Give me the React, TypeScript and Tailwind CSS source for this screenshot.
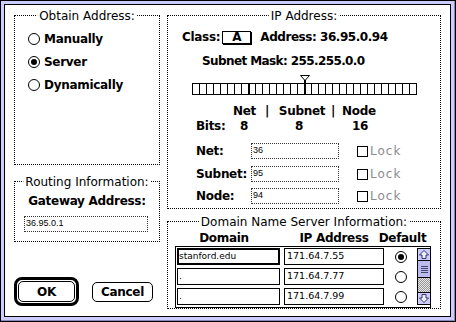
import React from "react";

const bold = "font-bold tracking-[-0.3px] text-[12px] leading-[14px]";

function Radio({ on = false }: { on?: boolean }) {
  return (
    <span className="w-[12px] h-[12px] shrink-0 rounded-full border border-black bg-white flex items-center justify-center">
      {on && <span className="w-[6px] h-[6px] rounded-full bg-black" />}
    </span>
  );
}

function Group({
  title,
  className = "",
  children,
}: {
  title: string;
  className?: string;
  children?: React.ReactNode;
}) {
  return (
    <div className={`relative border border-dotted border-black ${className}`}>
      <span className="absolute left-1/2 -translate-x-1/2 top-[-7px] bg-white px-[2px] text-[12px] leading-[14px] whitespace-nowrap">
        {title}
      </span>
      {children}
    </div>
  );
}

function DotField({ value, className = "" }: { value: string; className?: string }) {
  return (
    <div
      className={`h-[16px] border border-dotted border-[#333] pl-[1px] flex items-center font-['Liberation_Sans',sans-serif] text-[9px] ${className}`}
    >
      {value}
    </div>
  );
}

function LockRow({ label, value, className = "" }: { label: string; value: string; className?: string }) {
  return (
    <div className={`flex items-center h-[16px] pl-[28px] ${className}`}>
      <span className={`w-[55px] ${bold}`}>{label}</span>
      <DotField value={value} className="w-[88px]" />
      <span className="ml-[18px] w-[11px] h-[11px] border border-black" />
      <span className="ml-[2px] text-[12px] leading-[14px] tracking-[1px] text-[#8c8c8c]">Lock</span>
    </div>
  );
}

function Arrow({ down = false }: { down?: boolean }) {
  return (
    <svg width="12" height="11" viewBox="0 0 12 11" className={down ? "rotate-180" : ""}>
      <path d="M6 1.5 L10.5 6 H8 V9.5 H4 V6 H1.5 Z" fill="#eeeeff" stroke="#333366" strokeWidth="1" />
    </svg>
  );
}

const dnsRows = [
  { domain: "stanford.edu", ip: "171.64.7.55", on: true },
  { domain: ".", ip: "171.64.7.77", on: false },
  { domain: ".", ip: "171.64.7.99", on: false },
];

export default function App() {
  const cells = Array.from({ length: 32 }, (_, i) => i);
  return (
    <div className="w-[456px] h-[322px] border border-black bg-[#ccccff] pt-[3px] pl-[3px] pr-[4px] pb-[4px] shadow-[inset_-1px_-1px_0_#8888bb] font-['DejaVu_Sans',sans-serif] text-black">
      <div className="w-full h-full bg-white border border-black flex gap-[7px] pl-[9px] pr-[9px] pt-[10px]">
        {/* left column */}
        <div className="w-[146px] flex flex-col">
          <Group title="Obtain Address:" className="h-[150px] pt-[11px] pl-[13px]">
            {["Manually", "Server", "Dynamically"].map((t, i) => (
              <div key={t} className="flex items-center h-[23px] gap-[4px]">
                <Radio on={i === 1} />
                <span className={bold}>{t}</span>
              </div>
            ))}
          </Group>

          <Group title="Routing Information:" className="mt-[16px] h-[61px]">
            <div className={`mt-[12px] h-[14px] text-center ${bold}`}>Gateway Address:</div>
            <DotField value="36.95.0.1" className="mt-[8px] ml-[9px] w-[124px]" />
          </Group>

          <div className="mt-[35px] flex items-center gap-[13px]">
            <div className="w-[65px] h-[29px] rounded-[8px] border-[3px] border-black p-[1px]">
              <div className={`w-full h-full rounded-[5px] border border-black flex items-center justify-center ${bold}`}>
                OK
              </div>
            </div>
            <div className={`w-[61px] h-[20px] rounded-[5px] border border-black flex items-center justify-center ${bold}`}>
              Cancel
            </div>
          </div>
        </div>

        {/* right column */}
        <div className="w-[274px] flex flex-col">
          <Group title="IP Address:" className="h-[194px]">
            <div className="flex items-center h-[14px] mt-[14px] pl-[14px]">
              <span className={bold}>Class:</span>
              <span className={`ml-[2px] w-[29px] h-[13px] border border-black shadow-[1px_1px_0_#000] flex items-center justify-center ${bold}`}>
                A
              </span>
              <span className="ml-[9px] font-bold text-[12px] leading-[14px] tracking-[-0.45px]">
                Address: 36.95.0.94
              </span>
            </div>
            <div className="mt-[10px] h-[14px] pl-[34px] font-bold text-[12px] leading-[14px] tracking-[-0.6px]">
              Subnet Mask: 255.255.0.0
            </div>

            <div className="ml-[24px] mt-[7px] w-[225px]">
              <div className="h-[8px] pl-[108px]">
                <svg width="10" height="8" viewBox="0 0 10 8" className="block">
                  <polygon points="0.5,0.5 9.5,0.5 5,5.5" fill="white" stroke="black" strokeWidth="1" />
                  <rect x="4" y="5" width="2" height="3" fill="black" />
                </svg>
              </div>
              <div className="flex h-[12px] border-r border-black">
                {cells.map((i) => (
                  <div
                    key={i}
                    className={
                      i === 8 || i === 16
                        ? "w-[7px] h-full border-y border-l-2 border-black"
                        : "w-[7px] h-full border-y border-l border-black"
                    }
                  />
                ))}
              </div>
            </div>

            <div className={`flex mt-[9px] h-[14px] pl-[65px] ${bold}`}>
              <span className="w-[24px]">Net</span>
              <span className="w-[20px] text-center">|</span>
              <span className="w-[50px] text-center">Subnet</span>
              <span className="w-[12px] text-center">|</span>
              <span className="w-[40px] text-center">Node</span>
            </div>
            <div className={`flex mt-[1px] h-[14px] pl-[28px] ${bold}`}>
              <span className="w-[38px]">Bits:</span>
              <span className="w-[20px] text-center">8</span>
              <span className="ml-[35px] w-[20px] text-center">8</span>
              <span className="ml-[41px] w-[20px] text-center">16</span>
            </div>

            <LockRow label="Net:" value="36" className="mt-[10px]" />
            <LockRow label="Subnet:" value="95" className="mt-[7px]" />
            <LockRow label="Node:" value="94" className="mt-[6px]" />
          </Group>

          <Group title="Domain Name Server Information:" className="mt-[12px] h-[88px]">
            <div className={`flex mt-[9px] h-[14px] pl-[8px] ${bold}`}>
              <span className="w-[96px] text-center">Domain</span>
              <span className="ml-[12px] w-[100px] text-center">IP Address</span>
              <span className="w-[37px] flex justify-center whitespace-nowrap">Default</span>
            </div>
            <div className="ml-[7px] mt-[1px] w-[256px] h-[62px] border border-black flex pt-[1px] pl-[1px]">
              <div className="flex flex-col gap-[3px]">
                {dnsRows.map((r, i) => (
                  <div key={i} className="flex items-center h-[17px]">
                    <div
                      className={
                        i === 0
                          ? "w-[103px] h-full border-2 border-black flex items-center text-[9px]"
                          : "w-[103px] h-full border border-black pl-[1px] flex items-center text-[9px]"
                      }
                    >
                      {r.domain}
                    </div>
                    <div className="ml-[4px] w-[100px] h-full border border-black pl-[2px] flex items-center text-[9.5px]">
                      {r.ip}
                    </div>
                    <span className="ml-[11px]">
                      <Radio on={r.on} />
                    </span>
                  </div>
                ))}
              </div>
              <div className="ml-[10px] w-[13px] h-[57px] border-l border-y border-black flex flex-col">
                <div className="h-[12px] bg-[#ccccff] border-b border-black flex items-center justify-center">
                  <Arrow />
                </div>
                <div className="h-[17px] bg-[#bbbbee] border-b border-black flex flex-col items-center justify-center gap-[1px]">
                  <span className="w-[7px] h-[1px] bg-[#444477]" />
                  <span className="w-[7px] h-[1px] bg-[#444477]" />
                  <span className="w-[7px] h-[1px] bg-[#444477]" />
                  <span className="w-[7px] h-[1px] bg-[#444477]" />
                </div>
                <div className="h-[14px] bg-[repeating-conic-gradient(#999_0_25%,#e4e4e4_0_50%)] bg-[length:2px_2px]" />
                <div className="h-[12px] bg-[#ccccff] border-t border-black flex items-center justify-center">
                  <Arrow down />
                </div>
              </div>
            </div>
          </Group>
        </div>
      </div>
    </div>
  );
}
